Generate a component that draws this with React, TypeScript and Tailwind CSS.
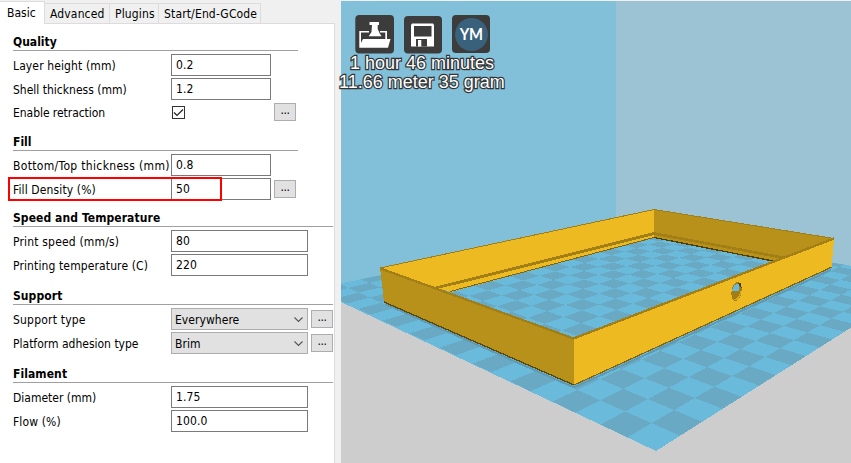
import React from "react";

const LIGHT = "#69badb";
const DARK = "#69a9c3";

// Perspective projection of build plate coordinates to the viewport.
function project(u: number, v: number): [number, number] {
  const w = 1 + 0.04176 * u + 0.03754 * v;
  return [
    (656 + 52.4 * u - 5.13 * v) / w - 341,
    (451 + 3.007 * u + 2.703 * v) / w,
  ];
}

function Tiles() {
  const tiles: string[] = [];
  for (let u = 0; u < 21; u++) {
    for (let v = 0; v < 21; v++) {
      if ((u + v) % 2 === 1) {
        tiles.push(
          [project(u, v), project(u + 1, v), project(u + 1, v + 1), project(u, v + 1)]
            .map((p) => p[0].toFixed(2) + "," + p[1].toFixed(2))
            .join(" "),
        );
      }
    }
  }
  return (
    <g fill={DARK} clipPath="url(#plate)">
      {tiles.map((t) => (
        <polygon key={t} points={t} />
      ))}
    </g>
  );
}

function Scene() {
  return (
    <svg className="block" width="510" height="462" viewBox="0 1 510 462" shapeRendering="crispEdges">
      <defs>
        <clipPath id="plate">
          <polygon points="315,451 511,327 511,266 275,228 0,283.3 0,302" />
        </clipPath>
      </defs>
      <rect width="510" height="463" fill="#cdcdcd" />
      <polygon points="0,0 275,0 275,228 0,283.5" fill="#82bfd8" />
      <polygon points="275,0 510,0 510,266 275,228" fill="#9bc3d3" />
      <polygon points="315,451 511,327 511,266 275,228 0,283.3 0,302" fill={LIGHT} />
      <Tiles />
      <polyline points="44,304 233,387.5 490,270" fill="none" stroke="#5f9bb4" strokeWidth="2" />
      <path d="M39 268L313 209.5V237.5L110 292L96 288Z" fill="#edba21" />
      <path d="M313 209.5L493 238.5L432 262L313 237.5Z" fill="#b8911a" />
      <path d="M39 268L313 209.5L493 238.5" fill="none" stroke="#a17e16" />
      <path d="M95 288L313 233.5L444 258" fill="none" stroke="#a17e16" strokeWidth="2.7" />
      <path d="M109 291.5L313 237.5" fill="none" stroke="#806410" />
      <path d="M313 237.5L432 261" fill="none" stroke="#4f3e0a" strokeWidth="1.3" />
      <polygon points="39,268 232.5,339 233,385 43,302" fill="#b8911a" />
      <polygon points="232.5,338.5 493,238 493,244 492,245 491,267 233,385" fill="#edba21" />
      <path d="M39.500 268.500L232.500 338.500L493 238.500" fill="none" stroke="#a17e16" strokeWidth="2.3" />
      <path d="M43 302L233 385" fill="none" stroke="#5d480b" strokeWidth="1.3" />
      <path d="M233 385L491 267" fill="none" stroke="#806410" strokeWidth="1.2" />
      <g transform="rotate(9 395.500 291.500)">
        <ellipse cx="395.500" cy="291.500" rx="5" ry="9.500" fill="#a17e16" />
        <path d="M391 291C391 286 394 283 397 284L398 290L392 292Z" fill={LIGHT} />
        <path d="M395 299C398 299 399 294 399.500 289L400.500 291C400 298 397 302 394 300Z" fill="#d5a51d" />
        <path d="M395 282.500H398L400 287L398 286Z" fill="#4f3e0a" />
      </g>
    </svg>
  );
}

function LoadIcon() {
  return (
    <svg width="40" height="40" viewBox="0 0 40 40">
      <rect x="0.300" y="1" width="38.700" height="38.500" rx="4" fill="#3c3c3c" />
      <path d="M4.300 17H14V18.600H6V29L8 25H35.500L33 33.700H4.300Z" fill="#fff" />
      <path d="M25 17H32V26H30.300V18.600H25Z" fill="#fff" />
      <path d="M14.500 8H24V11H22.700V15L24.500 19L26.500 22.300H13.700L16.500 18L17 11H14.500Z" fill="#fff" />
    </svg>
  );
}

function SaveIcon() {
  return (
    <svg width="40" height="40" viewBox="0 0 40 40">
      <rect x="1" y="2" width="38" height="37.500" rx="4" fill="#3c3c3c" />
      <path d="M9 9.500H30L31 11V32.500H8V11Z" fill="#fff" />
      <path d="M11 12H28.500V22.500H11ZM13 25H24V32.500H13Z" fill="#3c3c3c" />
      <path d="M15 26H18.300V32.500H15Z" fill="#fff" />
    </svg>
  );
}

function MoreButton() {
  return (
    <button className="flex h-[18px] w-[22px] items-center justify-center border border-[#adadad] bg-[#e1e1e1]">
      <span className="-mt-1 tracking-[-0.5px]">...</span>
    </button>
  );
}

type RowProps = {
  label: string;
  value?: string;
  spacing?: string;
  wide?: boolean;
  select?: boolean;
  checked?: boolean;
  more?: boolean;
};

function Row({ label, value, spacing, wide, select, checked, more }: RowProps) {
  return (
    <div className={(checked ? "-mt-px mb-px " : "") + "flex h-6 items-center"}>
      <span className={(spacing ?? "tracking-[0.120px]") + " w-[158px] shrink-0 pt-px whitespace-nowrap"}>
        {label}
      </span>
      <div className={wide ? "w-[140px]" : "w-[103px]"}>
        {checked ? (
          <div className="ml-px flex h-[13px] w-[13px] items-center justify-center border border-[#333]">
            <svg width="11" height="11" viewBox="0 0 11 11">
              <path d="M1 5.500L4 8.500L10 2.500" fill="none" stroke="#222" strokeWidth="1.200" />
            </svg>
          </div>
        ) : (
          <div
            className={
              (wide ? "w-[137px] " : "w-[100px] ") +
              (select ? "border-[#adadad] bg-[#e1e1e1] pl-[3px] " : "border-[#7a7a7a] bg-white pl-1 ") +
              "flex h-[22px] items-center justify-between border pr-1"
            }
          >
            <span className={select ? "pt-px tracking-[0.050px]" : "tracking-[0.100px]"}>{value}</span>
            {select && (
              <svg className="mt-0.5" width="9" height="6" viewBox="0 0 9 6">
                <path d="M0.500 0.500L4.500 4.500L8.500 0.500" fill="none" stroke="#555" strokeWidth="1.100" />
              </svg>
            )}
          </div>
        )}
      </div>
      {more && <MoreButton />}
    </div>
  );
}

function Heading({ children, wide }: { children: string; wide?: boolean }) {
  return (
    <h2
      className={
        (wide ? "w-[320px] tracking-[0.080px] " : "w-[285px] ") +
        "h-[18px] border-b border-[#a0a0a0] text-[12px] leading-[19px] font-bold"
      }
    >
      {children}
    </h2>
  );
}

const tabs = [
  { name: "Advanced", width: "w-[65px]" },
  { name: "Plugins", width: "w-[49px]" },
  { name: "Start/End-GCode", width: "w-[102px]" },
];

export default function App() {
  return (
    <div className="flex h-[463px] w-[851px] overflow-hidden bg-[#f0f0f0] text-[12px] leading-4 text-black [font-family:'DejaVu_Sans_Condensed','DejaVu_Sans',sans-serif] [font-stretch:condensed]">
      <div className="flex w-[341px] shrink-0 flex-col">
        <div className="flex h-[23px] items-end">
          <div className="z-10 -mb-px h-[23px] w-[45px] border-t border-r border-[#dcdcdc] bg-white pl-[7px] leading-[22px]">
            Basic
          </div>
          {tabs.map((t) => (
            <div
              key={t.name}
              className={
                t.width +
                " h-5 border-t border-r border-[#dcdcdc] pl-[5px] leading-[21px] tracking-[0.150px] whitespace-nowrap"
              }
            >
              {t.name}
            </div>
          ))}
        </div>
        <div className="relative w-[335px] grow border-t border-r border-[#dcdcdc] bg-white pl-[13px]">
          <section className="pt-[9px]">
            <Heading>Quality</Heading>
            <div className="pt-0.5">
              <Row label="Layer height (mm)" value="0.2" />
              <Row label="Shell thickness (mm)" value="1.2" spacing="tracking-[0px]" />
              <Row label="Enable retraction" checked more spacing="tracking-[-0.050px]" />
            </div>
          </section>
          <section className="pt-2">
            <Heading>Fill</Heading>
            <div className="pt-0.5">
              <Row label="Bottom/Top thickness (mm)" value="0.8" spacing="tracking-[0.330px]" />
              <Row label="Fill Density (%)" value="50" more />
            </div>
          </section>
          <section className="pt-2">
            <Heading wide>Speed and Temperature</Heading>
            <div className="pt-0.5">
              <Row label="Print speed (mm/s)" value="80" wide spacing="tracking-[0.180px]" />
              <Row label="Printing temperature (C)" value="220" wide />
            </div>
          </section>
          <section className="pt-2.5">
            <Heading wide>Support</Heading>
            <div className="pt-0.5">
              <Row label="Support type" value="Everywhere" wide select more spacing="tracking-[0.200px]" />
              <Row label="Platform adhesion type" value="Brim" wide select more spacing="tracking-[0px]" />
            </div>
          </section>
          <section className="pt-2.5">
            <Heading wide>Filament</Heading>
            <div className="pt-0.5">
              <Row label="Diameter (mm)" value="1.75" wide spacing="tracking-[0px]" />
              <Row label="Flow (%)" value="100.0" wide />
            </div>
          </section>
          <div className="absolute top-[153px] left-2 h-[24px] w-[214px] border-2 border-[#ff0000]" />
        </div>
      </div>
      <div className="relative mt-px h-[462px] w-[510px]">
        <Scene />
        <div className="absolute top-[13px] left-[14px] flex gap-2">
          <LoadIcon />
          <SaveIcon />
          <div className="flex h-10 w-10 items-end justify-center pb-px">
            <div className="flex h-[38px] w-[38px] items-center justify-center rounded-[4px] bg-[#3c3c3c]">
              <div className="flex h-[33px] w-[33px] items-center justify-center rounded-full bg-[#3a617b] text-[17px] tracking-[-0.300px] font-bold text-white [font-family:Lato,sans-serif]">
                <span className="scale-x-[0.870]">YM</span>
              </div>
            </div>
          </div>
        </div>
        <div className="absolute top-[53px] left-[-2px] w-[166px] text-center text-[18px] leading-[19px] whitespace-nowrap text-white [font-family:'Liberation_Sans',Arial,sans-serif] [-webkit-text-stroke:2.400px_#333] [paint-order:stroke_fill]">
          <div>1 hour 46 minutes</div>
          <div>11.66 meter 35 gram</div>
        </div>
      </div>
    </div>
  );
}
